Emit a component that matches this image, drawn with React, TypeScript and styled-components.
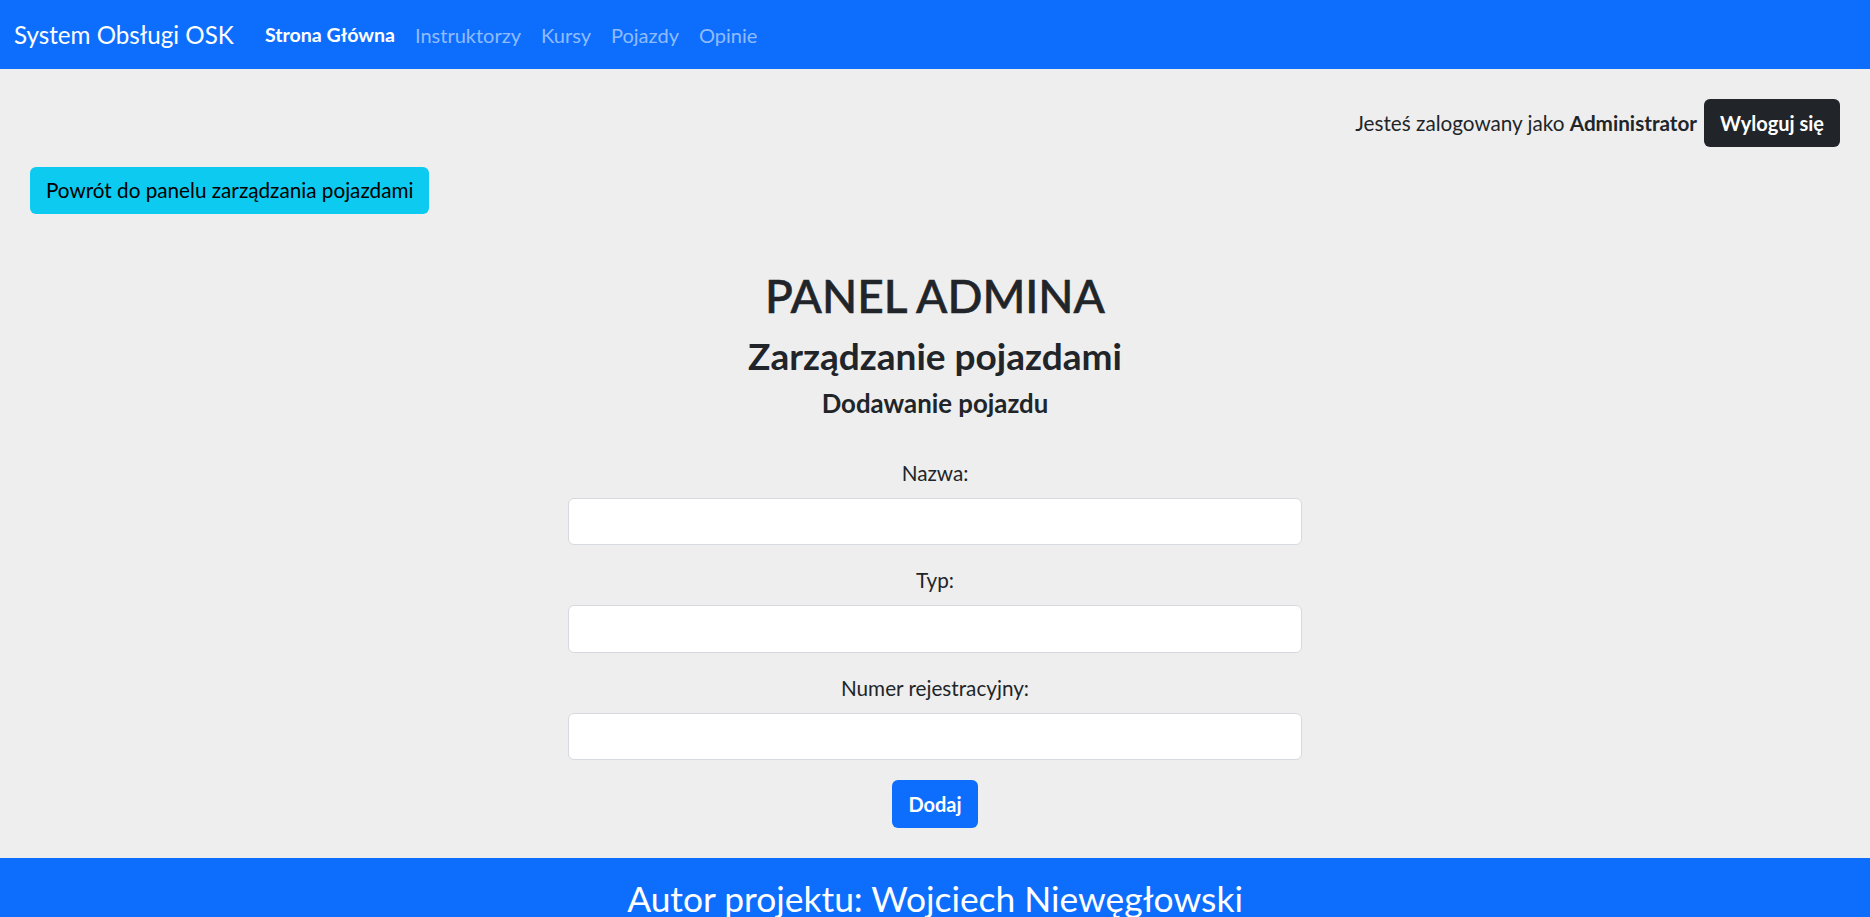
import React from "react";
import styled, { createGlobalStyle } from "styled-components";

const GlobalStyle = createGlobalStyle`
  * { box-sizing: border-box; }
  html, body { margin: 0; padding: 0; }
  body {
    background: #eeeeee;
    font-family: "Trebuchet MS", Lato, "Noto Sans", sans-serif;
    font-size: 20.7px;
    line-height: 30px;
    color: #212529;
  }
`;

const Navbar = styled.nav`
  height: 69px;
  background: #0d6efd;
  display: flex;
  align-items: center;
  padding: 0 14px;
`;

const Brand = styled.a`
  color: #fff;
  font-size: 24.2px;
  margin-right: 31px;
  text-decoration: none;
`;

const NavList = styled.div`
  display: flex;
  align-items: center;
  gap: 20px;
`;

const NavLink = styled.a<{ $active?: boolean }>`
  color: ${(p) => (p.$active ? "#ffffff" : "rgba(255,255,255,0.55)")};
  font-weight: ${(p) => (p.$active ? 700 : 400)};
  font-size: ${(p) => (p.$active ? "19.6px" : "20px")};
  text-decoration: none;
`;

const Main = styled.main`
  padding: 30px 30px 30px;
  display: flex;
  flex-direction: column;
`;

const LoginRow = styled.div`
  display: flex;
  justify-content: flex-end;
  align-items: center;
  gap: 7px;
`;

const Button = styled.button<{ $variant: "dark" | "info" | "primary"; $bold?: boolean }>`
  font-family: inherit;
  font-size: ${(p) => (p.$bold ? "20px" : "20.7px")};
  line-height: 30px;
  padding: 7.75px 15px;
  border-radius: 6px;
  border: 1px solid transparent;
  font-weight: ${(p) => (p.$bold ? 700 : 400)};
  background: ${(p) =>
    p.$variant === "dark" ? "#212529" : p.$variant === "info" ? "#0dcaf0" : "#0d6efd"};
  color: ${(p) => (p.$variant === "info" ? "#000" : "#fff")};
  cursor: pointer;
`;

const BackRow = styled.div`
  margin-top: 20px;
  display: flex;
`;

const Center = styled.section`
  display: flex;
  flex-direction: column;
  align-items: center;
  margin-top: 51.5px;
`;

const H1 = styled.h1`
  margin: 0 0 10px;
  font-size: 46px;
  line-height: 60px;
  font-weight: 500;
  -webkit-text-stroke: 0.6px #212529;
`;

const H3 = styled.h3`
  margin: 0 0 12px;
  font-size: 37px;
  line-height: 40px;
  font-weight: 700;
`;

const H5 = styled.h5`
  margin: 0;
  font-size: 25.8px;
  line-height: 30px;
  font-weight: 700;
`;

const Form = styled.form`
  margin-top: 40px;
  width: 734px;
  display: flex;
  flex-direction: column;
  align-items: center;
`;

const Field = styled.div`
  width: 100%;
  display: flex;
  flex-direction: column;
  align-items: center;
  margin-bottom: 20px;
`;

const Label = styled.label`
  line-height: 30px;
  margin-bottom: 10px;
`;

const Input = styled.input`
  width: 100%;
  height: 47.5px;
  border: 1px solid #d6d9dd;
  border-radius: 6px;
  background: #fff;
  font-family: inherit;
  font-size: 20px;
  padding: 0 15px;
  outline: none;
`;

const Footer = styled.footer`
  background: #0d6efd;
  color: #fff;
  text-align: center;
  padding: 17px 0 20px;
  font-size: 35.4px;
  line-height: 48px;
`;

export default function App() {
  return (
    <>
      <GlobalStyle />
      <Navbar>
        <Brand href="#">System Obsługi OSK</Brand>
        <NavList>
          <NavLink $active href="#">Strona Główna</NavLink>
          <NavLink href="#">Instruktorzy</NavLink>
          <NavLink href="#">Kursy</NavLink>
          <NavLink href="#">Pojazdy</NavLink>
          <NavLink href="#">Opinie</NavLink>
        </NavList>
      </Navbar>
      <Main>
        <LoginRow>
          <span>
            Jesteś zalogowany jako <b>Administrator</b>
          </span>
          <Button $variant="dark" $bold>Wyloguj się</Button>
        </LoginRow>
        <BackRow>
          <Button $variant="info">Powrót do panelu zarządzania pojazdami</Button>
        </BackRow>
        <Center>
          <H1>PANEL ADMINA</H1>
          <H3>Zarządzanie pojazdami</H3>
          <H5>Dodawanie pojazdu</H5>
          <Form onSubmit={(e) => e.preventDefault()}>
            <Field>
              <Label>Nazwa:</Label>
              <Input type="text" />
            </Field>
            <Field>
              <Label>Typ:</Label>
              <Input type="text" />
            </Field>
            <Field>
              <Label>Numer rejestracyjny:</Label>
              <Input type="text" />
            </Field>
            <Button $variant="primary" $bold type="submit">Dodaj</Button>
          </Form>
        </Center>
      </Main>
      <Footer>Autor projektu: Wojciech Niewęgłowski</Footer>
    </>
  );
}
